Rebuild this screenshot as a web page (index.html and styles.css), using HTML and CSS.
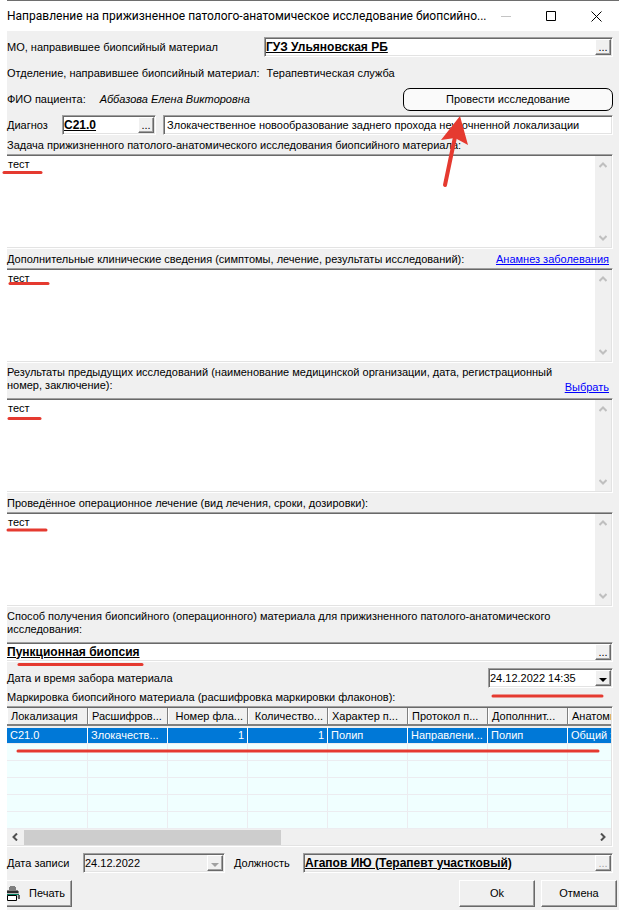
FILE: index.html
```html
<!DOCTYPE html>
<html lang="ru">
<head>
   <meta charset="UTF-8">
   <meta name="viewport" content="width=device-width, initial-scale=1.0">
   <title>Направление на исследование</title>
   <link rel="stylesheet" href="styles.css">
</head>
<body>
   <div class="window">
      <header class="titlebar">
         <h1 class="title">Направление на прижизненное патолого-анатомическое исследование биопсийно...</h1>
         <div class="controls">
            <button type="button" class="control" aria-label="Свернуть" disabled>
               <svg width="11" height="11"><path d="M0 5.5h10" stroke="#c4c4c4" fill="none"/></svg>
            </button>
            <button type="button" class="control" aria-label="Развернуть">
               <svg width="11" height="11"><path d="M0.5 0.5h9v9h-9z" stroke="#000" fill="none"/></svg>
            </button>
            <button type="button" class="control" aria-label="Закрыть">
               <svg width="11" height="11"><path d="M0.5 0.5l10 10M10.5 0.5l-10 10" stroke="#000" fill="none"/></svg>
            </button>
         </div>
      </header>

      <form class="form">
         <div class="row">
            <label class="mo-label" for="mo">МО, направившее биопсийный материал</label>
            <div class="field grow">
               <input class="strong" id="mo" type="text" value="ГУЗ Ульяновская РБ">
               <button type="button" class="pick" aria-label="Выбрать МО">...</button>
            </div>
         </div>
         <div class="row row-text">
            <span>Отделение, направившее биопсийный материал:</span>
            <span>Терапевтическая служба</span>
         </div>
         <div class="row row-patient">
            <span>ФИО пациента:</span>
            <em class="grow">Аббазова Елена Викторовна</em>
            <button type="button" class="round">Провести исследование</button>
         </div>
         <div class="row">
            <label class="diag-label" for="diag">Диагноз</label>
            <div class="field diag">
               <input class="strong" id="diag" type="text" value="C21.0">
               <button type="button" class="pick" aria-label="Выбрать диагноз">...</button>
            </div>
            <div class="field grow">
               <input class="plain" type="text" aria-label="Название диагноза" value="Злокачественное новообразование заднего прохода неуточненной локализации">
            </div>
         </div>

         <div class="caption">
            <label for="task">Задача прижизненного патолого-анатомического исследования биопсийного материала:</label>
         </div>
         <div class="field memo">
            <textarea id="task">тест</textarea>
            <div class="scroll">
               <svg width="8" height="6"><path d="M0.5 5L4 1.5L7.5 5"/></svg>
               <svg width="8" height="6"><path d="M0.5 1L4 4.5L7.5 1"/></svg>
            </div>
         </div>

         <div class="caption">
            <label for="clinic">Дополнительные клинические сведения (симптомы, лечение, результаты исследований):</label>
            <a href="#">Анамнез заболевания</a>
         </div>
         <div class="field memo">
            <textarea id="clinic">тест</textarea>
            <div class="scroll">
               <svg width="8" height="6"><path d="M0.5 5L4 1.5L7.5 5"/></svg>
               <svg width="8" height="6"><path d="M0.5 1L4 4.5L7.5 1"/></svg>
            </div>
         </div>

         <div class="caption tall">
            <label for="results">Результаты предыдущих исследований (наименование медицинской организации, дата, регистрационный<br>номер, заключение):</label>
            <a href="#">Выбрать</a>
         </div>
         <div class="field memo">
            <textarea id="results">тест</textarea>
            <div class="scroll">
               <svg width="8" height="6"><path d="M0.5 5L4 1.5L7.5 5"/></svg>
               <svg width="8" height="6"><path d="M0.5 1L4 4.5L7.5 1"/></svg>
            </div>
         </div>

         <div class="caption">
            <label for="surgery">Проведённое операционное лечение (вид лечения, сроки, дозировки):</label>
         </div>
         <div class="field memo">
            <textarea id="surgery">тест</textarea>
            <div class="scroll">
               <svg width="8" height="6"><path d="M0.5 5L4 1.5L7.5 5"/></svg>
               <svg width="8" height="6"><path d="M0.5 1L4 4.5L7.5 1"/></svg>
            </div>
         </div>

         <div class="caption tall">
            <label for="method">Способ получения биопсийного (операционного) материала для прижизненного патолого-анатомического<br>исследования:</label>
         </div>
         <div class="field open">
            <input class="strong" id="method" type="text" value="Пункционная биопсия">
            <button type="button" class="pick" aria-label="Выбрать способ">...</button>
         </div>

         <div class="row row-date">
            <label class="grow" for="taken">Дата и время забора материала</label>
            <div class="field taken">
               <input class="date" id="taken" type="text" value="24.12.2022 14:35">
               <button type="button" class="pick" aria-label="Открыть календарь">
                  <svg width="8" height="4"><path d="M0 0h8l-4 4z"/></svg>
               </button>
            </div>
         </div>

         <div class="caption marking">
            <span>Маркировка биопсийного материала (расшифровка маркировки флаконов):</span>
         </div>
         <div class="field grid">
            <div class="grid-view">
               <table>
                  <thead>
                     <tr>
                        <th>Локализация</th>
                        <th>Расшифров...</th>
                        <th class="num">Номер фла...</th>
                        <th class="num">Количество...</th>
                        <th>Характер п...</th>
                        <th>Протокол п...</th>
                        <th>Дополннит...</th>
                        <th>Анатоми</th>
                     </tr>
                  </thead>
                  <tbody>
                     <tr class="selected">
                        <td>C21.0</td>
                        <td>Злокачеств...</td>
                        <td class="num">1</td>
                        <td class="num">1</td>
                        <td>Полип</td>
                        <td>Направлени...</td>
                        <td>Полип</td>
                        <td>Общий х</td>
                     </tr>
                     <tr><td></td><td></td><td></td><td></td><td></td><td></td><td></td><td></td></tr>
                     <tr><td></td><td></td><td></td><td></td><td></td><td></td><td></td><td></td></tr>
                     <tr><td></td><td></td><td></td><td></td><td></td><td></td><td></td><td></td></tr>
                     <tr><td></td><td></td><td></td><td></td><td></td><td></td><td></td><td></td></tr>
                     <tr><td></td><td></td><td></td><td></td><td></td><td></td><td></td><td></td></tr>
                  </tbody>
               </table>
            </div>
            <div class="hscroll">
               <svg width="6" height="8"><path d="M5 0.5L1.5 4L5 7.5"/></svg>
               <div class="track"><div class="thumb"></div></div>
               <svg width="6" height="8"><path d="M1 0.5L4.5 4L1 7.5"/></svg>
            </div>
         </div>

         <div class="row row-record">
            <label class="record-label" for="record">Дата записи</label>
            <div class="field record">
               <input class="date" id="record" type="text" value="24.12.2022" readonly>
               <button type="button" class="pick" aria-label="Открыть календарь" disabled>
                  <svg width="8" height="4"><path d="M0 0h8l-4 4z"/></svg>
               </button>
            </div>
            <label class="post-label" for="post">Должность</label>
            <div class="field grow readonly">
               <input class="strong" id="post" type="text" value="Агапов ИЮ (Терапевт участковый)" readonly>
               <button type="button" class="pick" aria-label="Выбрать должность" disabled>...</button>
            </div>
         </div>

         <div class="actions">
            <button type="button" class="btn print">
               <svg width="13" height="16">
                  <path d="M3 0h5v1h1v3h2v1h1v2H0V4h2V1h1z" fill="#808080"/>
                  <path d="M0 5h11v2H0z" fill="#303030"/>
                  <path d="M0 7h12v2H0z" fill="#b8b8b8"/>
                  <path d="M0 8h12v1H0z" fill="#008060"/>
                  <path d="M0 9h12v3H0z" fill="#c8c8c8"/>
                  <path d="M11 9h2v4h-2z" fill="#606060"/>
                  <path d="M0.5 9.5h9v5h-9z" fill="#fff" stroke="#000"/>
               </svg>
               Печать
            </button>
            <button type="button" class="btn">Ok</button>
            <button type="button" class="btn">Отмена</button>
         </div>
      </form>

      <!-- Red pen marks over the form -->
      <svg class="marks" width="619" height="910" aria-hidden="true">
         <g stroke="#e53a30" stroke-width="3" stroke-linecap="round">
            <path d="M4 172.5H41"/>
            <path d="M10 283.5H48"/>
            <path d="M9 418.5H40"/>
            <path d="M8 530H46"/>
            <path d="M19 664.5H142"/>
            <path d="M493 696H602"/>
            <path d="M18 751H598"/>
            <path d="M445 185L455 137" stroke-width="4"/>
         </g>
         <path d="M460 116L468 145L455 138L441 140z" fill="#e53a30"/>
      </svg>
   </div>
</body>
</html>
```

FILE: styles.css
```css
* {
   box-sizing: border-box;
}

body {
   margin: 0;
   background: #fff;
   color: #000;
   font-family: "Liberation Sans", Arial, sans-serif;
   font-size: 11px;
   line-height: 13px;
}

input, textarea, button {
   margin: 0;
   padding: 0;
   border: 0;
   border-radius: 0;
   font: inherit;
   color: inherit;
   outline: none;
}

a {
   color: #0000ff;
   white-space: nowrap;
}

.window {
   position: relative;
   min-height: 100vh;
   padding-left: 7px;
   overflow: hidden;
}

.grow {
   flex: 1;
   min-width: 0;
}

/* Title bar */
.titlebar {
   display: flex;
   align-items: center;
   height: 31px;
   border-top: 1px solid #6e6e6e;
}

.title {
   flex: 1;
   min-width: 0;
   margin: 0;
   white-space: nowrap;
   font: 12px/16px Roboto, "Open Sans", sans-serif;
}

.controls {
   display: flex;
}

.control {
   display: flex;
   align-items: center;
   justify-content: center;
   width: 45px;
   height: 28px;
   background: none;
}

/* Form */
.form {
   min-height: calc(100vh - 31px);
   padding: 6px 6px 2px 0;
   background: #f0f0f0;
}

.row {
   display: flex;
   align-items: center;
   min-height: 20px;
}

.row-text {
   gap: 7px;
   min-height: 30px;
   padding-top: 2px;
}

.row-patient {
   gap: 14px;
   min-height: 24px;
   margin-bottom: 4px;
}

.mo-label {
   width: 257px;
}

.diag-label {
   width: 55px;
}

.diag {
   width: 94px;
   margin-right: 7px;
}

.field {
   display: flex;
   height: 20px;
   background: #fff;
   border: 1px solid;
   border-color: #a0a0a0 #fff #fff #a0a0a0;
   box-shadow: inset 1px 1px #696969, inset -1px -1px #e3e3e3;
   padding: 1px;
}

.field input {
   flex: 1;
   min-width: 0;
   height: 15px;
   background: transparent;
}

.strong {
   font: bold 12px/14px "Liberation Sans", Arial, sans-serif;
   text-decoration: underline;
}

.field .plain {
   height: 16px;
   padding-left: 2px;
}

.pick {
   flex: none;
   width: 16px;
   height: 16px;
   background: #f0f0f0;
   border: 1px solid;
   border-color: #fff #696969 #696969 #fff;
   box-shadow: inset -1px -1px #a0a0a0;
   text-align: center;
   line-height: 14px;
}

.pick:disabled {
   color: #a0a0a0;
   fill: #a0a0a0;
}

.round {
   width: 210px;
   height: 23px;
   background: #fafafa;
   border: 1px solid #000;
   border-radius: 7px;
}

.caption {
   display: flex;
   align-items: flex-start;
   justify-content: space-between;
   min-height: 19px;
   padding: 4px 4px 0 0;
   white-space: nowrap;
}

.tall {
   min-height: 35px;
   padding-top: 3px;
}

.tall a {
   align-self: flex-end;
   padding-bottom: 4px;
}

.open, .memo, .grid {
   border-left: 0;
   padding-left: 0;
   box-shadow: inset 0 1px #696969, inset -1px -1px #e3e3e3;
}

.memo {
   height: 95px;
}

.memo textarea {
   flex: 1;
   min-width: 0;
   padding: 2px 1px;
   resize: none;
   overflow: hidden;
   background: transparent;
}

.scroll {
   display: flex;
   flex-direction: column;
   align-items: center;
   justify-content: space-between;
   width: 16px;
   padding: 6px 0;
   background: #f0f0f0;
}

.scroll path {
   fill: none;
   stroke: #bfbfbf;
   stroke-width: 2;
}

.row-date {
   margin-top: 6px;
}

.taken {
   width: 125px;
}

.marking {
   min-height: 18px;
   padding-top: 3px;
}

/* Table of samples */
.grid {
   display: block;
   height: auto;
}

.grid-view {
   height: 121px;
   overflow: hidden;
   background: #f0ffff;
}

table {
   width: 641px;
   table-layout: fixed;
   border-collapse: separate;
   border-spacing: 0;
}

th, td {
   width: 80px;
   padding: 0 3px;
   white-space: nowrap;
   text-align: left;
}

th:first-child, td:first-child {
   width: 81px;
}

th {
   height: 18px;
   padding: 0 4px;
   background: #f0f0f0;
   border-bottom: 2px solid #808080;
   border-right: 1px solid #808080;
   box-shadow: inset 1px 0 #fff;
   font-weight: normal;
}

.num {
   text-align: right;
}

td {
   height: 17px;
   border-right: 1px solid #ececf0;
   border-bottom: 1px solid #ececf0;
}

.selected td {
   height: 18px;
   background: #0078d7;
   background-clip: padding-box;
   border-top: 2px solid #f0f0f0;
   border-right-color: #fff;
   color: #fff;
}

.hscroll {
   display: flex;
   align-items: center;
   gap: 6px;
   height: 16px;
   padding: 0 5px;
   background: #f0f0f0;
}

.hscroll path {
   fill: none;
   stroke: #505050;
   stroke-width: 2;
}

.track {
   flex: 1;
   height: 15px;
}

.thumb {
   width: 45%;
   height: 15px;
   background: #cdcdcd;
}

/* Bottom */
.row-record {
   margin-top: 6px;
}

.record-label {
   width: 76px;
}

.record {
   width: 142px;
   margin-right: 9px;
}

.post-label {
   width: 69px;
}

.record, .readonly {
   background: #f0f0f0;
}

.actions {
   display: flex;
   gap: 6px;
   margin: 7px -4px 0 0;
}

.btn {
   width: 76px;
   height: 27px;
   background: #f0f0f0;
   border: 1px solid;
   border-color: #fff #696969 #696969 #fff;
   box-shadow: inset -1px -1px #a0a0a0;
}

.print {
   display: flex;
   align-items: center;
   gap: 9px;
   width: 65px;
   margin-right: auto;
   border-left: 0;
}

.marks {
   position: absolute;
   top: 0;
   left: 0;
   pointer-events: none;
}
```
